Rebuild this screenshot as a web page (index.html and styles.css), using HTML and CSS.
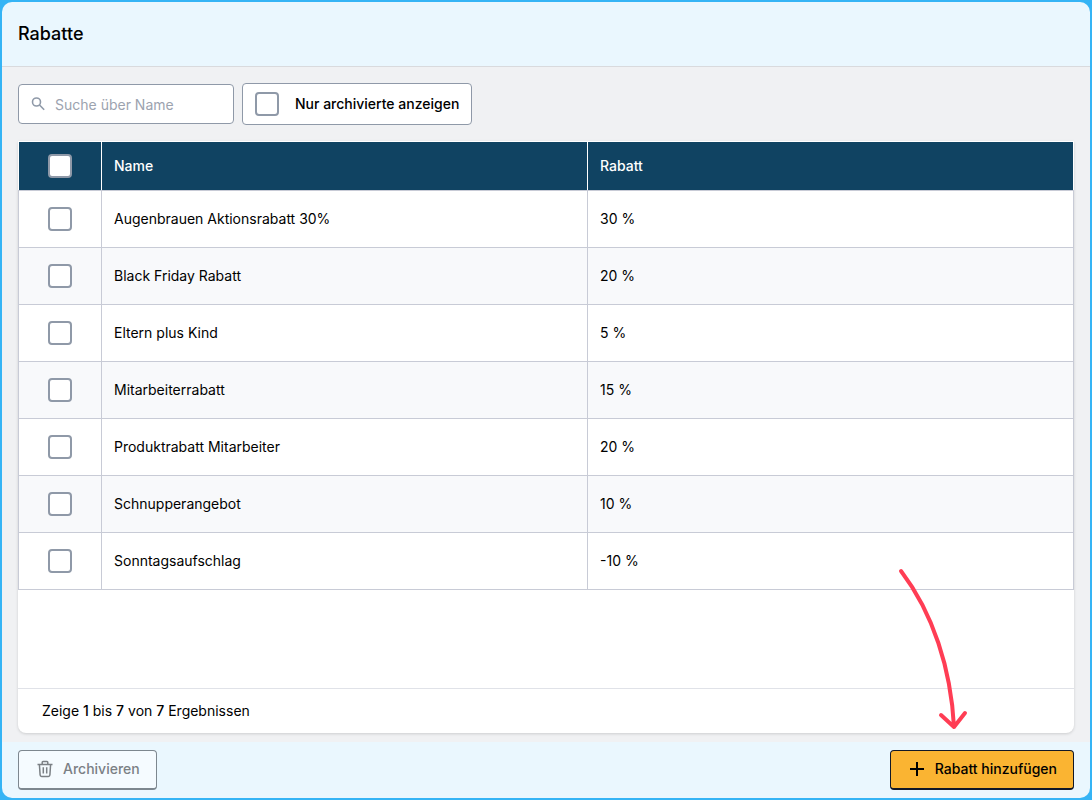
FILE: index.html
```html
<!DOCTYPE html>
<html lang="de">
<head>
    <meta charset="UTF-8">
    <meta name="viewport" content="width=device-width, initial-scale=1.0">
    <title>Rabatte</title>
    <link rel="stylesheet" href="styles.css">
</head>
<body>
    <div class="panel">
        <header class="header">
            <h1>Rabatte</h1>
        </header>
        <main class="content">
            <div class="toolbar">
                <label class="search">
                    <svg width="16" height="16" viewBox="0 0 16 16" fill="none" stroke="currentColor" stroke-width="1.6" aria-hidden="true">
                        <circle cx="6.5" cy="6" r="4"/>
                        <path d="M9.5 9L14.2 13.7"/>
                    </svg>
                    <input type="text" placeholder="Suche über Name" aria-label="Suche über Name">
                </label>
                <label class="archived">
                    <input type="checkbox" class="checkbox">
                    <span>Nur archivierte anzeigen</span>
                </label>
            </div>
            <div class="card">
                <table>
                    <thead>
                        <tr>
                            <th class="select"><input type="checkbox" class="checkbox" aria-label="Alle auswählen"></th>
                            <th>Name</th>
                            <th>Rabatt</th>
                        </tr>
                    </thead>
                    <tbody>
                        <tr>
                            <td class="select"><input type="checkbox" class="checkbox" aria-label="Augenbrauen Aktionsrabatt 30%"></td>
                            <td>Augenbrauen Aktionsrabatt 30%</td>
                            <td>30 %</td>
                        </tr>
                        <tr>
                            <td class="select"><input type="checkbox" class="checkbox" aria-label="Black Friday Rabatt"></td>
                            <td>Black Friday Rabatt</td>
                            <td>20 %</td>
                        </tr>
                        <tr>
                            <td class="select"><input type="checkbox" class="checkbox" aria-label="Eltern plus Kind"></td>
                            <td>Eltern plus Kind</td>
                            <td>5 %</td>
                        </tr>
                        <tr>
                            <td class="select"><input type="checkbox" class="checkbox" aria-label="Mitarbeiterrabatt"></td>
                            <td>Mitarbeiterrabatt</td>
                            <td>15 %</td>
                        </tr>
                        <tr>
                            <td class="select"><input type="checkbox" class="checkbox" aria-label="Produktrabatt Mitarbeiter"></td>
                            <td>Produktrabatt Mitarbeiter</td>
                            <td>20 %</td>
                        </tr>
                        <tr>
                            <td class="select"><input type="checkbox" class="checkbox" aria-label="Schnupperangebot"></td>
                            <td>Schnupperangebot</td>
                            <td>10 %</td>
                        </tr>
                        <tr>
                            <td class="select"><input type="checkbox" class="checkbox" aria-label="Sonntagsaufschlag"></td>
                            <td>Sonntagsaufschlag</td>
                            <td>-10 %</td>
                        </tr>
                    </tbody>
                </table>
                <div class="results">Zeige <b>1</b> bis <b>7</b> von <b>7</b> Ergebnissen</div>
            </div>
        </main>
        <footer class="footer">
            <button type="button" class="btn archive" disabled>
                <svg width="16" height="18" viewBox="0 0 16 18" fill="none" stroke="currentColor" stroke-width="1.5" stroke-linejoin="round" aria-hidden="true">
                    <path d="M.5 4.5h15M5.2 4.5V2.4q0-.8.8-.8h4q.8 0 .8.8v2.1M2.4 4.5l.7 10.5q.1 1.4 1.5 1.4h6.8q1.4 0 1.5-1.4l.7-10.5M6.3 7.2v6.4M9.7 7.2v6.4"/>
                </svg>
                Archivieren
            </button>
            <div class="add-wrap">
                <svg class="arrow" width="76" height="168" viewBox="0 0 76 168" fill="none" stroke="#ff3d54" stroke-width="4" stroke-linecap="round" stroke-linejoin="round" aria-hidden="true">
                    <path d="M4 4C36 46 54 102 57 160M44 148L57 160L68 146"/>
                </svg>
                <button type="button" class="btn add">
                    <svg width="16" height="18" viewBox="0 0 16 18" fill="none" stroke="currentColor" stroke-width="2" aria-hidden="true">
                        <path d="M8 2v14M1 9h14"/>
                    </svg>
                    Rabatt hinzufügen
                </button>
            </div>
        </footer>
    </div>
</body>
</html>
```
FILE: styles.css
```css
* {
    box-sizing: border-box;
}
body {
    margin: 0;
    padding: 2px;
    min-height: 100vh;
    display: flex;
    background-color: #35b4f5;
    color: #000000;
    font-family: Inter, sans-serif;
    font-size: 14px;
    line-height: 20px;
}
.panel {
    flex: 1;
    display: flex;
    flex-direction: column;
    border-radius: 10px;
    background-color: #eaf7fe;
}
.header {
    padding: 18px 16px;
    border-bottom: 1px solid #d9dadd;
}
.header h1 {
    margin: 0;
    font-size: 18px;
    line-height: 28px;
    font-weight: 500;
}
.content {
    flex: 1;
    display: flex;
    flex-direction: column;
    gap: 16px;
    padding: 16px 16px 9px;
    background-color: #f0f1f3;
}
.toolbar {
    display: flex;
    align-items: center;
    gap: 8px;
}
.search {
    display: flex;
    align-items: center;
    gap: 9px;
    width: 216px;
    height: 40px;
    padding: 0 11px;
    border: 1px solid #8f99a8;
    border-radius: 4px;
    background-color: #ffffff;
    color: #8f99a8;
}
.search svg {
    flex: none;
}
.search input {
    flex: 1;
    min-width: 0;
    padding: 2px 0 0;
    border: none;
    outline: none;
    background: transparent;
    font: inherit;
}
.search input::placeholder {
    color: #9ca3af;
}
.archived {
    display: flex;
    align-items: center;
    gap: 16px;
    height: 42px;
    padding: 0 12px;
    border: 1px solid #8f99a8;
    border-radius: 4px;
    background-color: #ffffff;
    font-weight: 500;
}
.checkbox {
    appearance: none;
    display: block;
    width: 24px;
    height: 24px;
    margin: 0;
    border: 2px solid #8f99a8;
    border-radius: 4px;
    background-color: #ffffff;
}
.checkbox:checked {
    background-color: #104362;
}
.card {
    flex: 1;
    display: flex;
    flex-direction: column;
    border-radius: 0 0 8px 8px;
    background-color: #ffffff;
    box-shadow: 0 1px 3px rgba(0, 0, 0, 0.15);
}
table {
    width: 100%;
    table-layout: fixed;
    border-collapse: collapse;
}
th,
td {
    height: 57px;
    padding: 0 12px;
    border: 1px solid #c8cbd6;
    text-align: left;
    font-weight: 400;
}
th {
    height: 49px;
    border-color: #ffffff #ffffff #c8cbd6;
    background-color: #104362;
    color: #ffffff;
    font-weight: 500;
}
.select {
    width: 83px;
}
.select .checkbox {
    margin: 0 auto;
}
tbody tr:nth-child(even) {
    background-color: #f8f9fb;
}
.results {
    margin-top: auto;
    padding: 12px 24px;
    border-top: 1px solid #e0e2e8;
}
.results b {
    font-weight: 500;
}
.footer {
    display: flex;
    align-items: center;
    justify-content: space-between;
    padding: 8px 16px;
}
.btn {
    display: flex;
    align-items: center;
    gap: 10px;
    height: 40px;
    padding: 0 16px 1px 18px;
    border: 1px solid #111827;
    border-bottom-width: 2px;
    border-radius: 4px;
    font: inherit;
    font-weight: 500;
    cursor: pointer;
}
.archive {
    border-color: #7d878f;
    background-color: #f5fbff;
    color: #7b8085;
    cursor: default;
}
.add {
    background-color: #fab432;
    color: #000000;
}
.add-wrap {
    position: relative;
}
/* hint arrow pointing down at the add button */
.arrow {
    position: absolute;
    left: 7px;
    bottom: 55px;
    pointer-events: none;
}
```
